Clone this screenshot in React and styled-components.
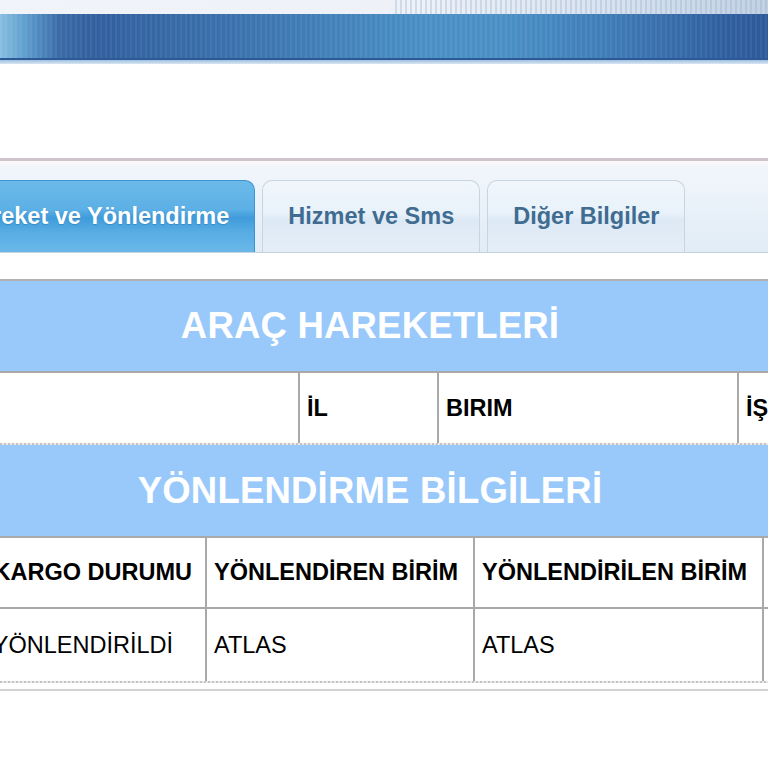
import styled, { createGlobalStyle } from "styled-components";

const GlobalStyle = createGlobalStyle`
  html, body {
    margin: 0;
    padding: 0;
    background: #ffffff;
    overflow: hidden;
  }
  body {
    font-family: "Liberation Sans", Arial, sans-serif;
  }
`;

const Page = styled.div`
  width: 940px;
  margin-left: -100px;
  display: flex;
  flex-direction: column;
`;

const TopStrip = styled.div`
  height: 14px;
  background:
    repeating-linear-gradient(90deg, rgba(150, 175, 205, 0.35) 0 2px, transparent 2px 5px) 495px 0 / 100% 100% no-repeat,
    linear-gradient(90deg, #f1f4f9 0%, #eef2f8 55%, #d9e3ef 75%, #b8c9de 100%);
`;

const Banner = styled.div`
  height: 46px;
  background:
    repeating-linear-gradient(90deg, rgba(255, 255, 255, 0.06) 0 2px, transparent 2px 5px),
    linear-gradient(
      90deg,
      #d2e6f4 0%,
      #86bfe1 10.6%,
      #5c9bcc 13.5%,
      #3a6aa6 17%,
      #325f9e 21%,
      #3a71ac 35%,
      #4a90c5 56%,
      #4a90c5 64%,
      #3e7bb6 76%,
      #2f5e9f 88%,
      #2a5190 100%
    );
  box-shadow: inset 0 -2px 0 #2b5a96;
`;

const BannerEdge = styled.div`
  height: 4px;
  background: linear-gradient(180deg, #9fc0e0 0%, #d9e6f2 100%);
`;

const Spacer = styled.div`
  height: ${(p) => p.$h}px;
  background: #ffffff;
`;

const TabBar = styled.div`
  border-top: 3px solid #cfc4cb;
  box-shadow: inset 0 3px 0 #fbf8fa;
  padding: 20px 0 0 36px;
  height: 71px;
  display: flex;
  align-items: flex-end;
  gap: 7px;
  background: linear-gradient(180deg, #f3f7fc 0%, #e9f1f9 50%, #e1ecf6 100%);
  border-bottom: 1px solid #c3d2df;
`;

const Tab = styled.div`
  height: 72px;
  padding: 0 25px;
  display: flex;
  align-items: center;
  box-sizing: border-box;
  border-radius: 10px 10px 0 0;
  font-size: 23.5px;
  font-weight: bold;
  white-space: nowrap;
  border: 1.5px solid ${(p) => (p.$active ? "#3d93d3" : "#c6d5e1")};
  border-bottom: none;
  color: ${(p) => (p.$active ? "#ffffff" : "#3f6c90")};
  text-shadow: ${(p) => (p.$active ? "0 1px 1px rgba(30, 90, 150, 0.35)" : "none")};
  background: ${(p) =>
    p.$active
      ? "linear-gradient(180deg, #6cbaea 0%, #5cb0e5 40%, #3f9bdb 52%, #56ace2 70%, #6ab8e9 100%)"
      : "linear-gradient(180deg, #f0f6fc 0%, #e9f2fa 45%, #dde9f5 55%, #e5eef8 100%)"};
`;

const GrayRule = styled.div`
  height: 2px;
  background: #b3b3b3;
`;

const Band = styled.div`
  height: ${(p) => p.$h}px;
  background: #99c9fb;
  display: flex;
  align-items: center;
  justify-content: center;
  color: #ffffff;
  font-size: 36.5px;
  font-weight: bold;
  letter-spacing: 0.2px;
`;

const Row = styled.div`
  display: grid;
  grid-template-columns: ${(p) => p.$cols};
  height: ${(p) => p.$h}px;
  border-top: 2px solid #a9a9a9;
  background: #ffffff;
`;

const Cell = styled.div`
  display: flex;
  align-items: center;
  justify-content: ${(p) => (p.$end ? "flex-end" : "flex-start")};
  padding: 0 ${(p) => p.$pr || 0}px 0 7px;
  font-size: 23.5px;
  font-weight: ${(p) => (p.$bold ? "bold" : "normal")};
  color: #000000;
  white-space: nowrap;
  overflow: hidden;
  border-left: ${(p) => (p.$first ? "none" : "2px solid #a9a9a9")};
`;

const DottedRule = styled.div`
  height: ${(p) => p.$h}px;
  background:
    repeating-linear-gradient(90deg, #c4c4c4 0 2px, #e8e8e8 2px 4px) 0 0 / 100% 2px no-repeat,
    #ffffff;
  border-bottom: ${(p) => (p.$double ? "2px solid #d2d2d2" : "none")};
`;

const colsA = "398px 139px 300px 1fr";
const colsB = "305px 268px 289px 1fr";

export default function App() {
  return (
    <>
      <GlobalStyle />
      <Page>
        <TopStrip />
        <Banner />
        <BannerEdge />
        <Spacer $h={94} />
        <TabBar>
          <Tab $active>Hareket ve Yönlendirme</Tab>
          <Tab>Hizmet ve Sms</Tab>
          <Tab>Diğer Bilgiler</Tab>
        </TabBar>
        <Spacer $h={26} />
        <GrayRule />
        <Band $h={90}>ARAÇ HAREKETLERİ</Band>
        <Row $cols={colsA} $h={70}>
          <Cell $first $bold></Cell>
          <Cell $bold>İL</Cell>
          <Cell $bold>BIRIM</Cell>
          <Cell $bold>İŞLEM</Cell>
        </Row>
        <DottedRule $h={2} />
        <Band $h={91}>YÖNLENDİRME BİLGİLERİ</Band>
        <Row $cols={colsB} $h={69}>
          <Cell $first $bold $end $pr={13}>
            KARGO DURUMU
          </Cell>
          <Cell $bold>YÖNLENDİREN BİRİM</Cell>
          <Cell $bold>YÖNLENDİRİLEN BİRİM</Cell>
          <Cell $bold>TARİH</Cell>
        </Row>
        <Row $cols={colsB} $h={72}>
          <Cell $first $end $pr={32}>
            YÖNLENDİRİLDİ
          </Cell>
          <Cell>ATLAS</Cell>
          <Cell>ATLAS</Cell>
          <Cell></Cell>
        </Row>
        <DottedRule $h={8} $double />
        <Spacer $h={80} />
      </Page>
    </>
  );
}
